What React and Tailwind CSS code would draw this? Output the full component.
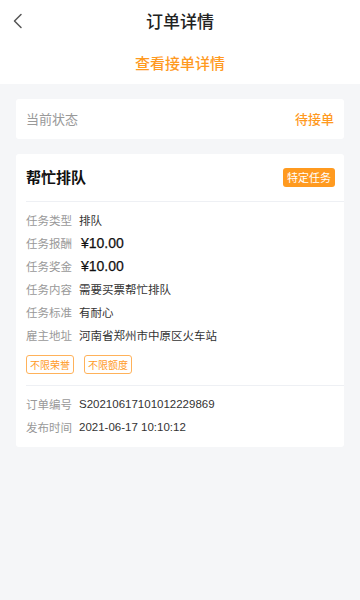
const FONT = { fontFamily: "'Noto Sans CJK SC', 'Noto Sans', sans-serif" };
const NUM = { fontFamily: "'Liberation Sans', 'Noto Sans CJK SC', sans-serif" };

const ROWS = [
  { label: '任务类型', value: '排队' },
  { label: '任务报酬', value: '¥10.00', money: true },
  { label: '任务奖金', value: '¥10.00', money: true },
  { label: '任务内容', value: '需要买票帮忙排队' },
  { label: '任务标准', value: '有耐心' },
  { label: '雇主地址', value: '河南省郑州市中原区火车站' },
];

function Row({ label, value, money, num }) {
  return (
    <div className="flex items-center h-[23px]">
      <span className="w-[53px] text-[11.5px] text-[#999]">{label}</span>
      {money ? (
        <span className="text-[14px] text-[#111] ml-[2px] [-webkit-text-stroke:0.25px_#111]" style={NUM}>{value}</span>
      ) : (
        <span className="text-[11.5px] text-[#333]" style={num ? NUM : undefined}>{value}</span>
      )}
    </div>
  );
}

export default function App() {
  return (
    <div className="w-[360px] h-[600px] bg-[#f5f6f8] flex flex-col" style={FONT}>
      <div className="bg-white h-[84px] flex flex-col">
        <div className="relative h-[42px] flex items-center justify-center">
          <svg className="absolute left-[12px] top-[13px]" width="12" height="16" viewBox="0 0 12 16" fill="none">
            <path d="M9 1.5 L2.5 8 L9 14.5" stroke="#555" strokeWidth="1.5" strokeLinecap="round" strokeLinejoin="round" />
          </svg>
          <span className="text-[17px] text-[#222] font-medium">订单详情</span>
        </div>
        <div className="h-[42px] flex items-center justify-center">
          <span className="text-[15px] text-[#ff9a1f] font-medium">查看接单详情</span>
        </div>
      </div>

      <div className="px-[16px] pt-[15px] flex flex-col gap-[15px]">
        <div className="bg-white rounded-[3px] h-[40px] px-[10px] flex items-center justify-between">
          <span className="text-[13px] text-[#999]">当前状态</span>
          <span className="text-[13px] text-[#ff9a1f] font-medium">待接单</span>
        </div>

        <div className="bg-white rounded-[3px] pl-[10px] pb-[8px]">
          <div className="h-[47px] flex items-center justify-between pr-[9px]">
            <span className="text-[15px] text-[#111] font-bold">帮忙排队</span>
            <span className="bg-[#ff9a1f] text-white text-[11px] rounded-[3px] px-[4px] h-[19px] flex items-center">特定任务</span>
          </div>
          <div className="h-px bg-[#eef0f4]" />
          <div className="pt-[7px] flex flex-col">
            {ROWS.map((r) => (
              <Row key={r.label} {...r} />
            ))}
          </div>
          <div className="flex gap-[10px] pt-[8px] pb-[11px]">
            <span className="border border-[#ffb25a] text-[#ff9a1f] text-[10px] rounded-[3px] h-[19px] px-[3px] flex items-center">不限荣誉</span>
            <span className="border border-[#ffb25a] text-[#ff9a1f] text-[10px] rounded-[3px] h-[19px] px-[3px] flex items-center">不限额度</span>
          </div>
          <div className="h-px bg-[#eef0f4]" />
          <div className="pt-[7px] flex flex-col">
            <Row label="订单编号" value="S20210617101012229869" num />
            <Row label="发布时间" value="2021-06-17 10:10:12" num />
          </div>
        </div>
      </div>
    </div>
  );
}
